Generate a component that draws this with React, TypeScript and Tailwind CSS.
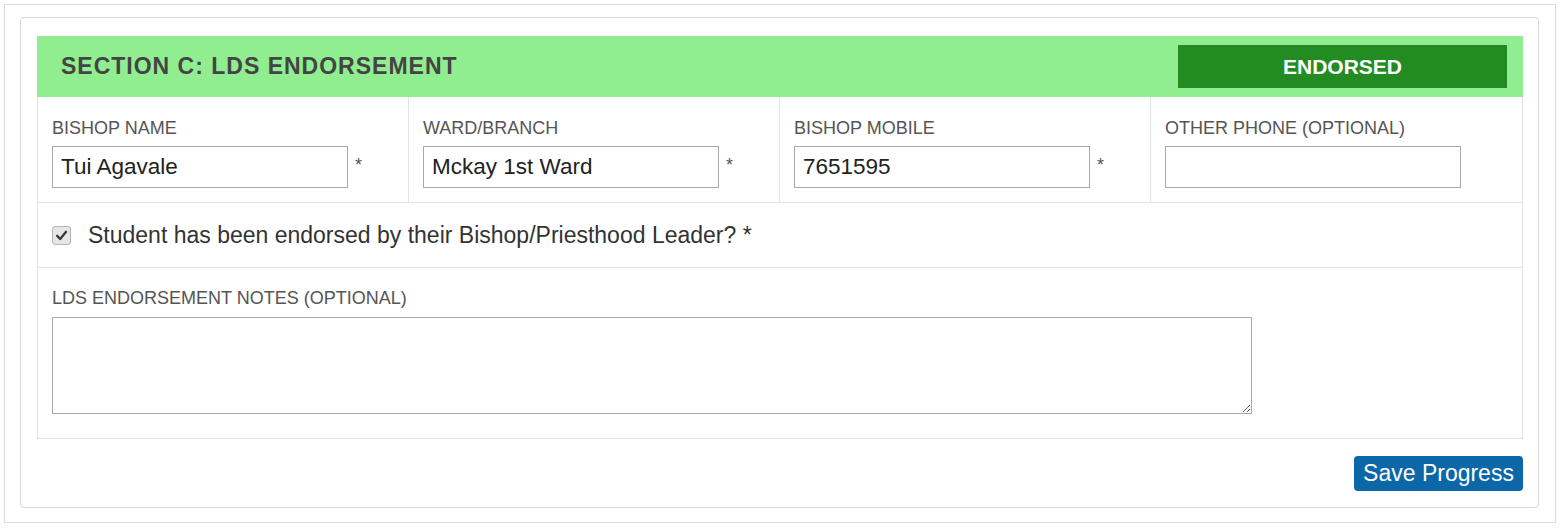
import React from 'react';

const FONT = { fontFamily: '"Liberation Sans", Arial, sans-serif' };

function Field({ label, value, required }: { label: string; value: string; required?: boolean }) {
  return (
    <div className="pl-[14px] pt-[21px] pb-[14px] border-r border-[#e3e3e3] last:border-r-0">
      <label className="block text-[18px] leading-[20px] text-[#555] mb-[8px]">{label}</label>
      <div className="flex items-center">
        <input
          type="text"
          readOnly
          value={value}
          className="w-[296px] h-[42px] border border-[#a9a9a9] px-[8px] text-[22.5px] text-[#222] outline-none bg-white"
        />
        {required && <span className="ml-[7px] text-[18px] text-[#555] -mt-[4px]">*</span>}
      </div>
    </div>
  );
}

export default function App() {
  return (
    <div className="w-[1560px] h-[530px] bg-white p-[4px]" style={FONT}>
      <div className="border border-[#dcdcdc] pt-[12px] pb-[14px] pl-[15px] pr-[16px]">
        <div className="border border-[#d7d7d7] rounded-[4px] pt-[18px] pb-[16px] pl-[16px] pr-[15px]">
          <div className="h-[61px] bg-[#90ee90] flex items-center justify-between pl-[24px] pr-[16px]">
            <h2 className="text-[23px] font-bold tracking-[1px] text-[#444]">SECTION C: LDS ENDORSEMENT</h2>
            <div className="w-[329px] h-[43px] bg-[#228b22] flex items-center justify-center text-white text-[21px] font-bold">
              ENDORSED
            </div>
          </div>

          <div className="border-l border-r border-b border-[#e3e3e3]">
            <div className="grid grid-cols-4 border-b border-[#e3e3e3]">
              <Field label="BISHOP NAME" value="Tui Agavale" required />
              <Field label="WARD/BRANCH" value="Mckay 1st Ward" required />
              <Field label="BISHOP MOBILE" value="7651595" required />
              <Field label="OTHER PHONE (OPTIONAL)" value="" />
            </div>

            <div className="h-[65px] flex items-center pl-[14px] border-b border-[#e3e3e3]">
              <div className="w-[19px] h-[19px] rounded-[3px] border border-[#b5b5b5] bg-[#e6e6e6] flex items-center justify-center">
                <svg width="13" height="13" viewBox="0 0 12 12">
                  <path d="M2 6.3 L4.8 9.2 L10.2 2.6" fill="none" stroke="#3a3a3a" strokeWidth="2.2" strokeLinecap="round" strokeLinejoin="round" />
                </svg>
              </div>
              <span className="ml-[17px] text-[23px] text-[#333]">
                Student has been endorsed by their Bishop/Priesthood Leader? *
              </span>
            </div>

            <div className="pl-[14px] pt-[20px] pb-[24px]">
              <label className="block text-[18px] leading-[20px] text-[#555] mb-[9px]">LDS ENDORSEMENT NOTES (OPTIONAL)</label>
              <textarea
                readOnly
                className="block w-[1200px] h-[97px] border border-[#a9a9a9] outline-none bg-white"
              />
            </div>
          </div>

          <div className="flex justify-end mt-[17px]">
            <button className="h-[35px] w-[169px] rounded-[4px] bg-[#0b67a8] text-white text-[23px] leading-none">
              Save Progress
            </button>
          </div>
        </div>
      </div>
    </div>
  );
}
